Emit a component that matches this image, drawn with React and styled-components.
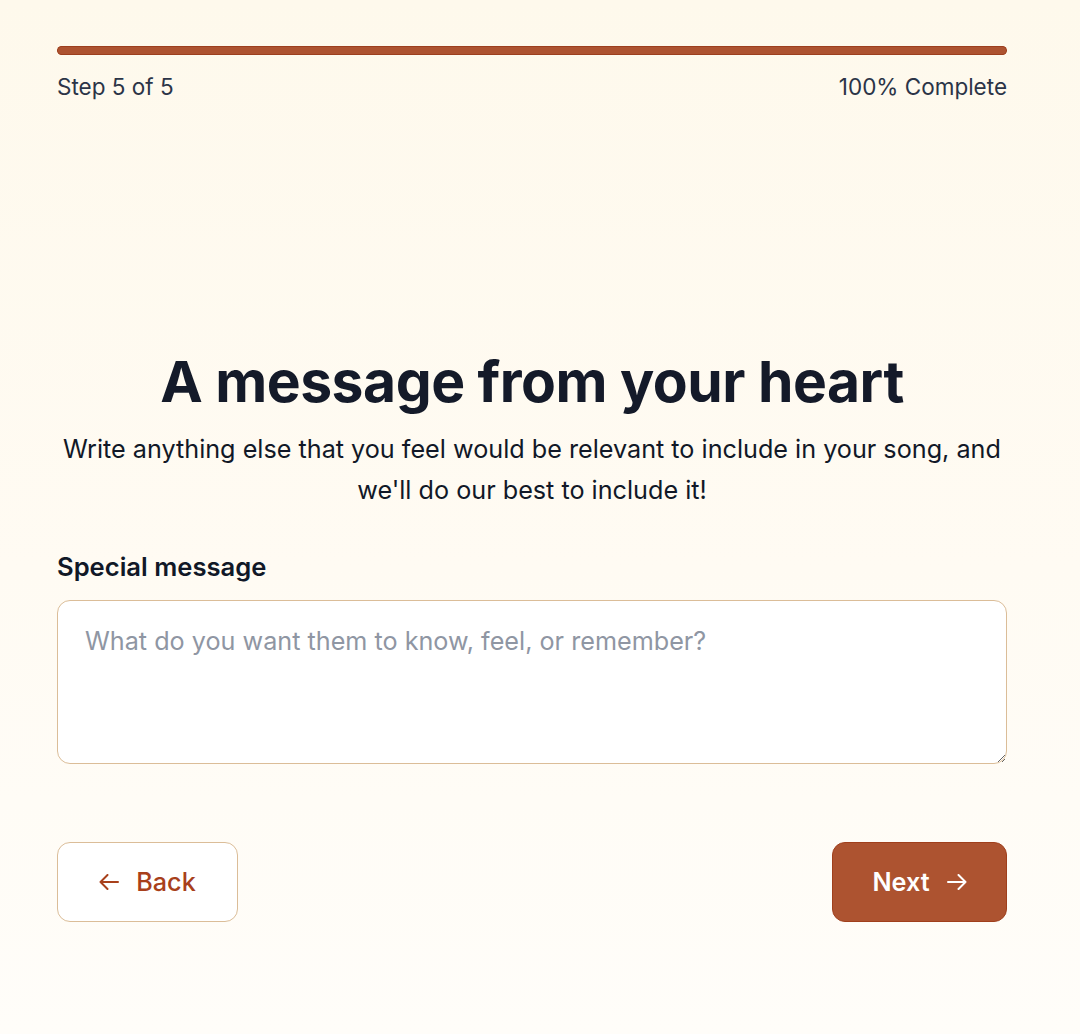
import React, { useState } from 'react';
import styled, { createGlobalStyle } from 'styled-components';

const GlobalStyle = createGlobalStyle`
	html, body {
		margin: 0;
		padding: 0;
	}
	body {
		font-family: Inter, "Noto Sans", "Liberation Sans", sans-serif;
		background: linear-gradient(180deg, #fef9ec 0%, #fffbf3 55%, #fffdf9 100%);
		min-height: 1034px;
		color: #111827;
	}
`

const Page = styled.div`
	width: 950px;
	margin-left: 57px;
	padding-top: 46px;
	min-height: 1034px;
	box-sizing: border-box;
`

const ProgressTrack = styled.div`
	height: 9px;
	border-radius: 5px;
	background: #f3e3cf;
	overflow: hidden;
`

const ProgressFill = styled.div`
	height: 100%;
	background: #ad5330;
	border-radius: 5px;
	box-shadow: inset 0 0 0 1px #9c3f1e;
`

const ProgressInfo = styled.div`
	display: flex;
	justify-content: space-between;
	margin-top: 17px;
	font-size: 22.5px;
	line-height: 30px;
	color: #2b3447;
`

const Content = styled.div`
	margin-top: 244px;
`

const Title = styled.h1`
	margin: 0;
	text-align: center;
	font-size: 57px;
	line-height: 72px;
	font-weight: 700;
	letter-spacing: -0.5px;
	color: #141a29;
`

const Subtitle = styled.p`
	margin: 11px auto 0;
	max-width: 950px;
	text-align: center;
	font-size: 25.2px;
	line-height: 41px;
	color: #111827;
`

const Label = styled.label`
	display: block;
	margin-top: 40px;
	font-size: 25.6px;
	line-height: 32px;
	font-weight: 600;
	color: #111827;
`

const TextArea = styled.textarea`
	display: block;
	width: 100%;
	height: 164px;
	margin-top: 17px;
	box-sizing: border-box;
	padding: 24px 27px;
	border: 1.5px solid #dbbd98;
	border-radius: 13px;
	background: #ffffff;
	font-family: inherit;
	font-size: 25.2px;
	line-height: 32px;
	color: #111827;
	outline: none;
	resize: vertical;
	&::placeholder {
		color: #8f96a3;
	}
`

const Actions = styled.div`
	display: flex;
	justify-content: space-between;
	align-items: center;
	margin-top: 78px;
`

const Button = styled.button`
	display: flex;
	align-items: center;
	justify-content: center;
	gap: 17px;
	height: 80px;
	box-sizing: border-box;
	border-radius: 13px;
	font-family: inherit;
	font-size: 25.2px;
	font-weight: ${p => p.$primary ? 600 : 500};
	cursor: pointer;
	width: ${p => p.$primary ? '175px' : '181px'};
	background: ${p => p.$primary ? '#ad5330' : '#ffffff'};
	color: ${p => p.$primary ? '#ffffff' : '#a8401b'};
	border: 1.5px solid ${p => p.$primary ? '#a03f1c' : '#dbbd98'};
	svg {
		flex-shrink: 0;
	}
`

const Arrow = ({ left }) => (
	<svg width="20" height="16" viewBox="0 0 20 16" fill="none" stroke="currentColor" strokeWidth="2" strokeLinecap="round" strokeLinejoin="round">
		{left
			? <path d="M19 8H1.5M8.5 1L1.5 8l7 7" />
			: <path d="M1 8h17.5M11.5 1l7 7-7 7" />}
	</svg>
)

export default function App() {
	const [message, setMessage] = useState('');
	return (
		<>
			<GlobalStyle />
			<Page>
				<ProgressTrack>
					<ProgressFill style={{ width: '100%' }} />
				</ProgressTrack>
				<ProgressInfo>
					<span>Step 5 of 5</span>
					<span>100% Complete</span>
				</ProgressInfo>
				<Content>
					<Title>A message from your heart</Title>
					<Subtitle>
						Write anything else that you feel would be relevant to include in your song, and we'll do our best to include it!
					</Subtitle>
					<Label htmlFor="special">Special message</Label>
					<TextArea
						id="special"
						value={message}
						onChange={e => setMessage(e.target.value)}
						placeholder="What do you want them to know, feel, or remember?"
					/>
					<Actions>
						<Button>
							<Arrow left />
							Back
						</Button>
						<Button $primary>
							Next
							<Arrow />
						</Button>
					</Actions>
				</Content>
			</Page>
		</>
	)
}
